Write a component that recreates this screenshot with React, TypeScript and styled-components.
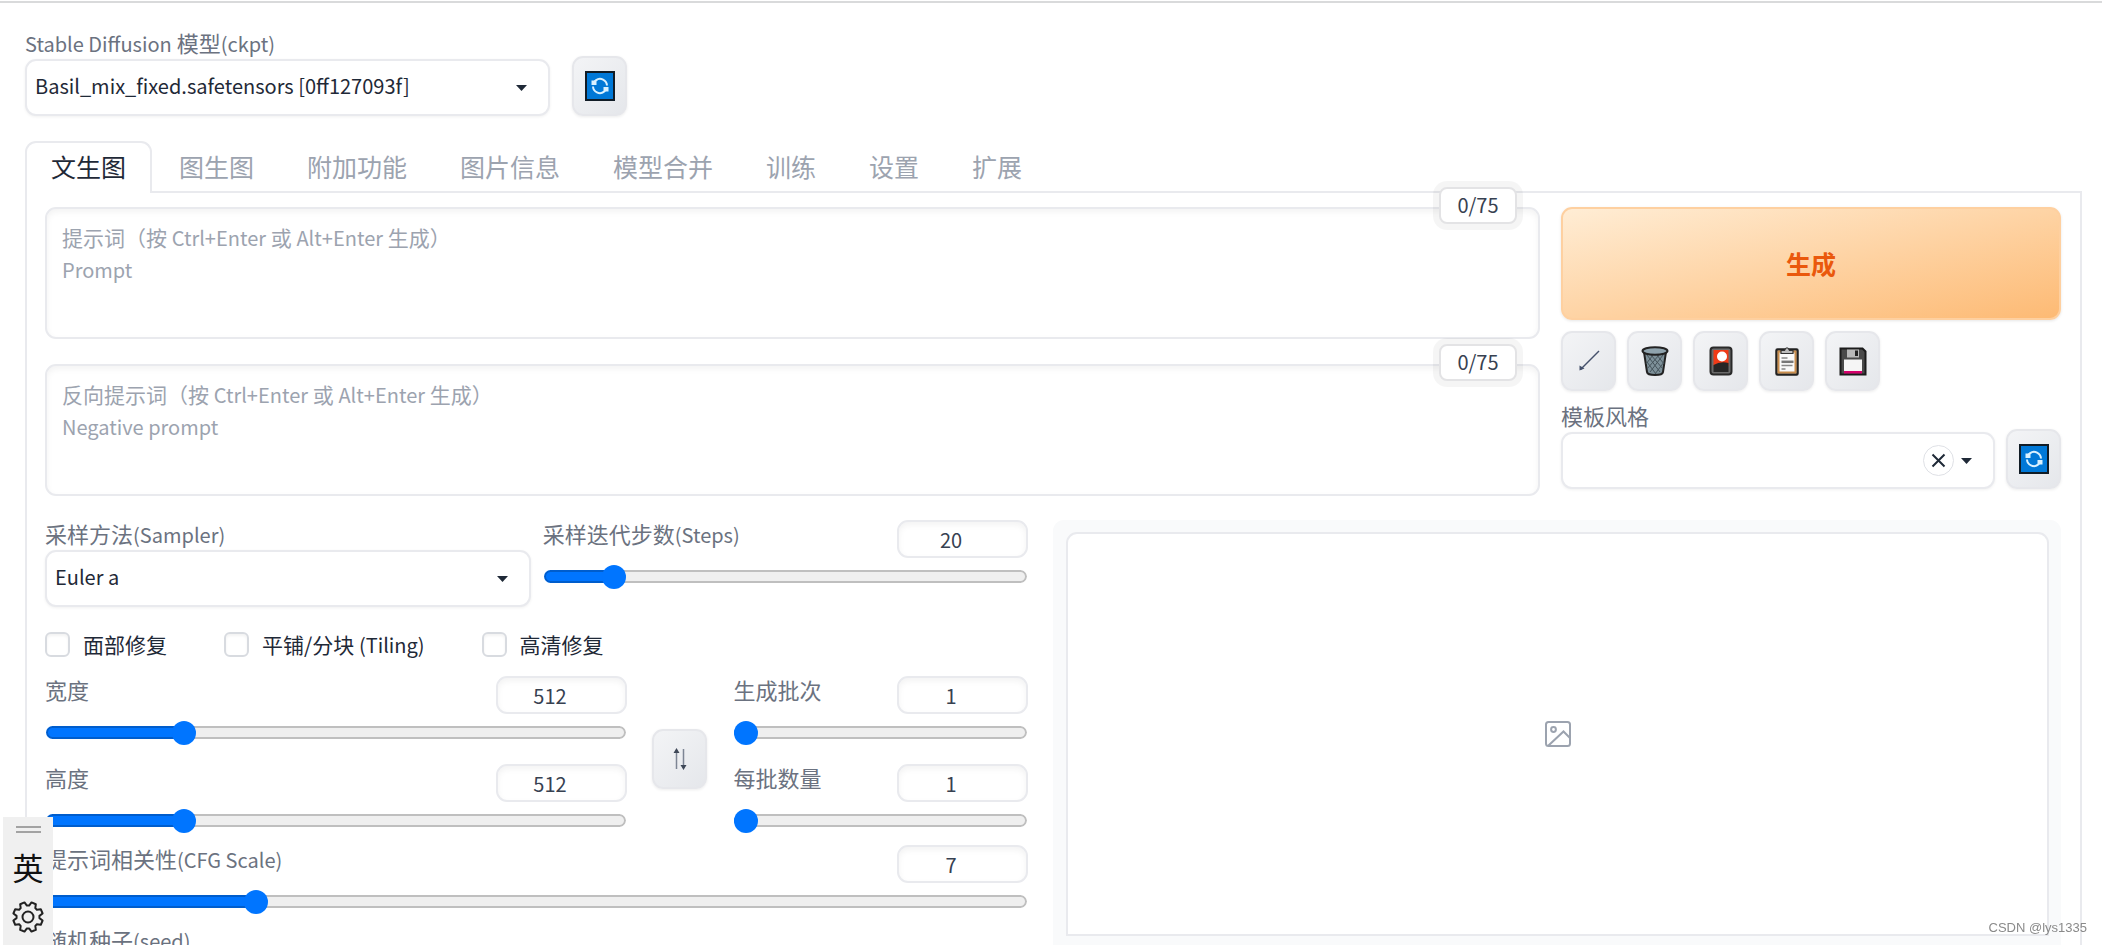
import React, { useState } from 'react';
import styled, { createGlobalStyle, css } from 'styled-components';

const GlobalStyle = createGlobalStyle`
  *, *::before, *::after { box-sizing: border-box; }
  body {
    margin: 0;
    background: #fff;
    color: #1f2937;
    font-family: "Noto Sans CJK SC", "Noto Sans", sans-serif;
    font-size: 20px;
    line-height: 31px;
  }
  button, input, select, textarea { font: inherit; color: inherit; margin: 0; }
`;

const line = '#e9eaee';
const frame = css`
  border: 2px solid ${line};
  border-radius: 11px;
  background: #fff;
`;

const Page = styled.div`
  height: 100vh;
  overflow: hidden;
  padding-top: 1px;
`;
const TopRule = styled.div`
  height: 2px;
  background: #d9dadb;
`;
const Main = styled.main`
  padding: 26px 20px 0 25px;
`;
const ModelRow = styled.div`
  display: flex;
  align-items: flex-end;
  gap: 22px;
  margin-bottom: 25px;
`;
const Field = styled.div<{ $width?: string }>`
  display: flex;
  flex-direction: column;
  gap: 4px;
  width: ${(p) => p.$width ?? 'auto'};
  min-width: 0;
`;
const Label = styled.label`
  color: #6b7280;
  font-size: 22px;
  line-height: 26px;
  white-space: nowrap;
`;
const Latin = styled.span`
  font-size: 20px;
  line-height: 20px;
`;
const SelectWrap = styled.div`
  position: relative;
  display: flex;
`;
const Select = styled.select`
  ${frame}
  appearance: none;
  width: 100%;
  height: 57px;
  padding: 0 56px 4px 8px;
  box-shadow: 0 1px 3px rgba(0, 0, 0, 0.06);
`;
const SelectTools = styled.div`
  position: absolute;
  inset: 0 22px 0 auto;
  display: flex;
  align-items: center;
  gap: 6px;
  pointer-events: none;
`;
const ClearButton = styled.button`
  display: grid;
  place-items: center;
  width: 31px;
  height: 31px;
  padding: 0;
  border: 1px solid #dfe1e6;
  border-radius: 50%;
  background: #fff;
  pointer-events: auto;
`;
const ToolButton = styled.button`
  display: grid;
  place-items: center;
  flex: none;
  width: 55px;
  height: 60px;
  padding: 0;
  border: 2px solid #e6e7eb;
  border-radius: 11px;
  background: linear-gradient(135deg, #f3f4f6, #e5e7eb);
  box-shadow: 0 1px 3px rgba(0, 0, 0, 0.08);
`;
const Tabs = styled.div`
  position: relative;
  display: flex;
  gap: 1px;
`;
const Tab = styled.button<{ $active: boolean }>`
  height: 52px;
  margin-bottom: -2px;
  padding: 0 24px 4px;
  border: 2px solid ${(p) => (p.$active ? line : 'transparent')};
  border-bottom: 0;
  border-radius: 11px 11px 0 0;
  background: ${(p) => (p.$active ? '#fff' : 'transparent')};
  color: ${(p) => (p.$active ? '#1f2937' : '#9ca3af')};
  font-size: 25px;
`;
const Panel = styled.section`
  border: 2px solid ${line};
  padding: 14px 19px 24px 18px;
`;
const Top = styled.div`
  display: grid;
  grid-template-columns: minmax(0, 1fr) 500px;
  gap: 21px;
  margin-bottom: 24px;
`;
const Prompts = styled.div`
  display: flex;
  flex-direction: column;
  gap: 25px;
`;
const PromptBox = styled.div`
  position: relative;
  display: flex;
`;
const Textarea = styled.textarea`
  ${frame}
  width: 100%;
  height: 132px;
  padding: 14px;
  line-height: 32px;
  resize: none;
  box-shadow: inset 0 3px 6px rgba(0, 0, 0, 0.05);
`;
const Hint = styled.label`
  position: absolute;
  inset: 14px 17px auto;
  color: #9ca3af;
  font-size: 21px;
  line-height: 32px;
  pointer-events: none;
`;
const Counter = styled.output`
  position: absolute;
  top: -20px;
  right: 23px;
  width: 78px;
  height: 37px;
  border: 2px solid #e3e3e5;
  border-radius: 8px;
  background: #fff;
  box-shadow: 0 0 0 6px rgba(0, 0, 0, 0.04);
  line-height: 32px;
  text-align: center;
  color: #374151;
`;
const Actions = styled.div`
  display: flex;
  flex-direction: column;
  gap: 11px;
`;
const Generate = styled.button`
  height: 113px;
  border: 2px solid #fed0a0;
  border-radius: 11px;
  background: linear-gradient(to bottom right, #ffedd5, #fdba74);
  box-shadow: 0 1px 3px rgba(0, 0, 0, 0.1);
  color: #ea580c;
  font-size: 25px;
  font-weight: 700;
`;
const Tools = styled.div`
  display: flex;
  gap: 11px;
`;
const StyleRow = styled.div`
  display: grid;
  grid-template-columns: minmax(0, 1fr) auto;
  align-items: end;
  gap: 11px;
`;
const Bottom = styled.div`
  display: grid;
  grid-template-columns: minmax(0, 983fr) minmax(0, 1007fr);
  gap: 25px;
`;
const Settings = styled.div`
  display: flex;
  flex-direction: column;
`;
const Halves = styled.div`
  display: grid;
  grid-template-columns: repeat(2, minmax(0, 1fr));
  gap: 12px;
`;
const Checks = styled.div`
  display: flex;
  gap: 57px;
  margin: 22px 0 16px;
`;
const CheckLabel = styled.label`
  display: flex;
  align-items: center;
  gap: 13px;
  font-size: 21px;
`;
const Checkbox = styled.input`
  appearance: none;
  width: 25px;
  height: 25px;
  border: 2px solid #d8dbe0;
  border-radius: 6px;
  background: #fff;
  box-shadow: inset 0 2px 3px rgba(0, 0, 0, 0.05);
  &:checked { background: #0075ff; }
`;
const SizeGrid = styled.div`
  display: grid;
  grid-template-columns: minmax(0, 1fr) 56px 295px;
  gap: 25px;
  align-items: center;
  margin-bottom: 18px;
`;
const SwapCell = styled.div`
  display: flex;
  padding-top: 14px;
`;
const Stack = styled.div<{ $gap: number }>`
  display: flex;
  flex-direction: column;
  gap: ${(p) => p.$gap}px;
`;
const SliderBlock = styled.div`
  display: flex;
  flex-direction: column;
  gap: 12px;
`;
const SliderHead = styled.div`
  display: flex;
  justify-content: space-between;
  align-items: flex-start;
`;
const NumberBox = styled.input`
  ${frame}
  appearance: textfield;
  width: 131px;
  height: 38px;
  padding: 0 24px 0 0;
  text-align: center;
  color: #374151;
  box-shadow: inset 0 3px 6px rgba(0, 0, 0, 0.05);
  &::-webkit-inner-spin-button { display: none; }
`;
const Range = styled.input<{ $fill: number }>`
  appearance: none;
  display: block;
  width: calc(100% - 2px);
  height: 13px;
  margin: 0 1px;
  border-radius: 7px;
  background: linear-gradient(#0075ff, #0075ff) 0 0 / ${(p) => p.$fill}% 100% no-repeat, #efefef;
  box-shadow: inset 0 0 0 2px rgba(0, 0, 0, 0.2);
  &::-webkit-slider-thumb {
    appearance: none;
    width: 24px;
    height: 24px;
    border-radius: 50%;
    background: #0075ff;
  }
`;
const Output = styled.div`
  padding: 12px 12px 200px 13px;
  border-radius: 11px 11px 0 0;
  background: #f9fafb;
`;
const Gallery = styled.div`
  display: grid;
  place-items: center;
  height: 404px;
  border: 2px solid ${line};
  border-radius: 11px 11px 0 0;
  background: #fff;
`;
const Ime = styled.aside`
  position: fixed;
  left: 3px;
  bottom: 0;
  display: flex;
  flex-direction: column;
  align-items: center;
  width: 50px;
  height: 128px;
  padding-top: 9px;
  background: #f0f0f0;
  color: #111;
`;
const Grip = styled.div`
  width: 25px;
  height: 7px;
  border: solid #a3a3a3;
  border-width: 2px 0;
`;
const ImeMode = styled.div`
  margin: 12px 0;
  font-size: 31px;
  line-height: 44px;
`;
const Watermark = styled.div`
  position: fixed;
  right: 15px;
  bottom: 8px;
  color: #8a8a8a;
  font: 13px/18px "Liberation Sans", sans-serif;
`;

const Caret = () => (
  <svg width="13" height="8" viewBox="0 0 13 8"><path d="M1 1h11L6.500 7z" fill="#1f2937" /></svg>
);
const RefreshIcon = () => (
  <svg width="30" height="30" viewBox="0 0 30 30">
    <rect x="1" y="1" width="28" height="28" fill="#0078d7" stroke="#111c26" strokeWidth="2" />
    <g fill="none" stroke="#d9f1ff" strokeWidth="2">
      <path d="M11 9.200A7 7 0 0 1 22 14.500" />
      <path d="M19 20.800A7 7 0 0 1 8 15.500" />
      <path d="M8.500 12.500A7 7 0 0 1 12 8.600M21.500 17.500A7 7 0 0 1 18 21.400" />
    </g>
    <path d="M6.500 9.500l5 0v4.500h-5zM18.500 16h5v4.500h-5z" fill="#d9f1ff" />
  </svg>
);
const ArrowIcon = () => (
  <svg width="24" height="24" viewBox="0 0 24 24" fill="none" stroke="#44516b">
    <path d="M22 2L3.500 20.500" strokeWidth="1.500" />
    <path d="M2.500 16.500v5l5-2z" fill="#44516b" stroke="none" />
  </svg>
);
const TrashIcon = () => (
  <svg width="28" height="30" viewBox="0 0 28 30">
    <path d="M3 6l3 20q.5 3 8 3t8-3l3-20z" fill="#7d9099" stroke="#222" strokeWidth="2" />
    <path d="M6 9l13 17M10 9l12 14M16 9l7 9M6 16l9 12M22 9L9 26M18 9L6 23M12 9l-7 9M23 16l-9 12" stroke="#46545b" strokeWidth="1" />
    <ellipse cx="14" cy="5" rx="12.500" ry="3.800" fill="#8fa3ad" stroke="#222" strokeWidth="2" />
  </svg>
);
const CardIcon = () => (
  <svg width="24" height="30" viewBox="0 0 24 30">
    <rect x="1.500" y="1.500" width="21" height="27" rx="3" fill="#6a6a6a" stroke="#292929" strokeWidth="2" />
    <path d="M4.500 4h15v16h-15z" fill="#f03a17" />
    <path d="M4.500 19q7-4 15-2v9h-15z" fill="#262626" />
    <circle cx="13" cy="10.500" r="5" fill="#fff" />
  </svg>
);
const ClipboardIcon = () => (
  <svg width="24" height="30" viewBox="0 0 24 30">
    <rect x="1.500" y="3.500" width="21" height="25" rx="1" fill="#fff" stroke="#222" strokeWidth="2.500" />
    <rect x="3.500" y="5.500" width="17" height="21" fill="#fafafa" stroke="#c98d4c" strokeWidth="2" />
    <path d="M6 7.500V4.500h3.500Q12-1 14.500 4.500H18v3z" fill="#bbb" stroke="#333" strokeWidth="1.200" />
    <path d="M6.500 12h6M6.500 19.500h11M6.500 23h4" stroke="#888" strokeWidth="1.500" />
    <path d="M6.500 15.800h12" stroke="#777" strokeWidth="2.500" />
  </svg>
);
const FloppyIcon = () => (
  <svg width="28" height="29" viewBox="0 0 28 29">
    <path d="M1.500 1.500h22l3 3v23h-25z" fill="#4a4a4a" stroke="#1b1b1b" strokeWidth="2" />
    <path d="M8 2.500h12v8H8z" fill="#b9b9b9" />
    <path d="M16 3.500h3v5.500h-3z" fill="#222" />
    <path d="M5 12.500h18v12H5z" fill="#f5f5f5" />
    <path d="M5 24h18v2.500H5z" fill="#d6006c" />
  </svg>
);
const SwapIcon = () => (
  <svg width="16" height="24" viewBox="0 0 16 24" fill="none" stroke="#7d8594" strokeWidth="1.500">
    <path d="M4.500 22V3M11.500 2v19" />
    <path d="M4.500 1L1.500 6h6zM11.500 23l-3-5h6z" fill="#3f4858" stroke="none" />
  </svg>
);
const ImageIcon = () => (
  <svg width="28" height="28" viewBox="0 0 28 28" fill="none" stroke="#9ca3af" strokeWidth="2">
    <rect x="2" y="2" width="24" height="24" rx="2.500" />
    <circle cx="9.500" cy="9.500" r="2.400" />
    <path d="M4.500 25.500L19.500 11.500l6.500 6.500" />
  </svg>
);
const CloseIcon = () => (
  <svg width="15" height="15" viewBox="0 0 15 15" stroke="#1f2937" strokeWidth="2">
    <path d="M1.500 1.500l12 12M13.500 1.500l-12 12" />
  </svg>
);

const gearPoints = Array.from({ length: 8 }, (_, i) =>
  [[-17, 11.500], [-9, 15], [9, 15], [17, 11.500]].map(([deg, r]) => {
    const a = ((i * 45 + 22.5 + deg) * Math.PI) / 180;
    return `${16 + r * Math.cos(a)},${16 + r * Math.sin(a)}`;
  }).join(' ')
).join(' ');
const GearIcon = () => (
  <svg width="32" height="32" viewBox="0 0 32 32" fill="none" stroke="#222" strokeWidth="2" strokeLinejoin="round">
    <polygon points={gearPoints} />
    <circle cx="16" cy="16" r="5.500" />
  </svg>
);

type PromptProps = { id: string; hint: string; english: string };
const Prompt = ({ id, hint, english }: PromptProps) => {
  const [text, setText] = useState('');
  return (
    <PromptBox>
      <Textarea id={id} aria-label={hint} value={text} onChange={(e) => setText(e.target.value)} />
      {text === '' && (
        <Hint htmlFor={id}>
          {hint}（按 <Latin>Ctrl+Enter</Latin> 或 <Latin>Alt+Enter</Latin> 生成）<br />
          <Latin>{english}</Latin>
        </Hint>
      )}
      <Counter htmlFor={id}>0/75</Counter>
    </PromptBox>
  );
};

type SliderProps = { id: string; label: React.ReactNode; min: number; max: number; initial: number };
const Slider = ({ id, label, min, max, initial }: SliderProps) => {
  const [value, setValue] = useState(initial);
  const change = (e: React.ChangeEvent<HTMLInputElement>) => setValue(Number(e.target.value));
  return (
    <SliderBlock>
      <SliderHead>
        <Label id={`${id}-label`} htmlFor={id}>{label}</Label>
        <NumberBox id={id} type="number" min={min} max={max} value={value} onChange={change} />
      </SliderHead>
      <Range
        type="range" aria-labelledby={`${id}-label`} min={min} max={max} value={value} onChange={change}
        $fill={((value - min) / (max - min)) * 96 + 2}
      />
    </SliderBlock>
  );
};

const tabNames = ['文生图', '图生图', '附加功能', '图片信息', '模型合并', '训练', '设置', '扩展'];
const tools = [
  { name: '读取参数', Icon: ArrowIcon },
  { name: '清空提示词', Icon: TrashIcon },
  { name: '附加网络', Icon: CardIcon },
  { name: '应用模板', Icon: ClipboardIcon },
  { name: '保存模板', Icon: FloppyIcon },
];
const checks = [<>面部修复</>, <>平铺/分块 <Latin>(Tiling)</Latin></>, <>高清修复</>];

export default function App() {
  const [tab, setTab] = useState(0);
  return (
    <Page>
      <GlobalStyle />
      <TopRule />
      <Main>
        <ModelRow>
          <Field $width="525px">
            <Label htmlFor="model"><Latin>Stable Diffusion</Latin> 模型<Latin>(ckpt)</Latin></Label>
            <SelectWrap>
              <Select id="model"><option>Basil_mix_fixed.safetensors [0ff127093f]</option></Select>
              <SelectTools><Caret /></SelectTools>
            </SelectWrap>
          </Field>
          <ToolButton aria-label="刷新模型"><RefreshIcon /></ToolButton>
        </ModelRow>
        <Tabs role="tablist">
          {tabNames.map((name, i) => (
            <Tab key={name} role="tab" aria-selected={i === tab} $active={i === tab} onClick={() => setTab(i)}>{name}</Tab>
          ))}
        </Tabs>
        <Panel>
          <Top>
            <Prompts>
              <Prompt id="prompt" hint="提示词" english="Prompt" />
              <Prompt id="negative" hint="反向提示词" english="Negative prompt" />
            </Prompts>
            <Actions>
              <Generate>生成</Generate>
              <Tools>
                {tools.map(({ name, Icon }) => <ToolButton key={name} aria-label={name}><Icon /></ToolButton>)}
              </Tools>
              <StyleRow>
                <Field>
                  <Label htmlFor="styles">模板风格</Label>
                  <SelectWrap>
                    <Select id="styles"><option /></Select>
                    <SelectTools>
                      <ClearButton aria-label="清除"><CloseIcon /></ClearButton>
                      <Caret />
                    </SelectTools>
                  </SelectWrap>
                </Field>
                <ToolButton aria-label="刷新模板"><RefreshIcon /></ToolButton>
              </StyleRow>
            </Actions>
          </Top>
          <Bottom>
            <Settings>
              <Halves>
                <Field>
                  <Label htmlFor="sampler">采样方法<Latin>(Sampler)</Latin></Label>
                  <SelectWrap>
                    <Select id="sampler"><option>Euler a</option></Select>
                    <SelectTools><Caret /></SelectTools>
                  </SelectWrap>
                </Field>
                <Slider id="steps" label={<>采样迭代步数<Latin>(Steps)</Latin></>} min={1} max={150} initial={20} />
              </Halves>
              <Checks>
                {checks.map((text, i) => (
                  <CheckLabel key={i}><Checkbox type="checkbox" /><span>{text}</span></CheckLabel>
                ))}
              </Checks>
              <SizeGrid>
                <Stack $gap={25}>
                  <Slider id="width" label="宽度" min={64} max={2048} initial={512} />
                  <Slider id="height" label="高度" min={64} max={2048} initial={512} />
                </Stack>
                <SwapCell><ToolButton aria-label="交换宽高"><SwapIcon /></ToolButton></SwapCell>
                <Stack $gap={25}>
                  <Slider id="count" label="生成批次" min={1} max={100} initial={1} />
                  <Slider id="size" label="每批数量" min={1} max={8} initial={1} />
                </Stack>
              </SizeGrid>
              <Stack $gap={18}>
                <Slider id="cfg" label={<>提示词相关性<Latin>(CFG Scale)</Latin></>} min={1} max={30} initial={7} />
                <Label as="span">随机种子<Latin>(seed)</Latin></Label>
              </Stack>
            </Settings>
            <Output><Gallery><ImageIcon /></Gallery></Output>
          </Bottom>
        </Panel>
      </Main>
      <Ime aria-label="输入法">
        <Grip />
        <ImeMode>英</ImeMode>
        <GearIcon />
      </Ime>
      <Watermark>CSDN @lys1335</Watermark>
    </Page>
  );
}
